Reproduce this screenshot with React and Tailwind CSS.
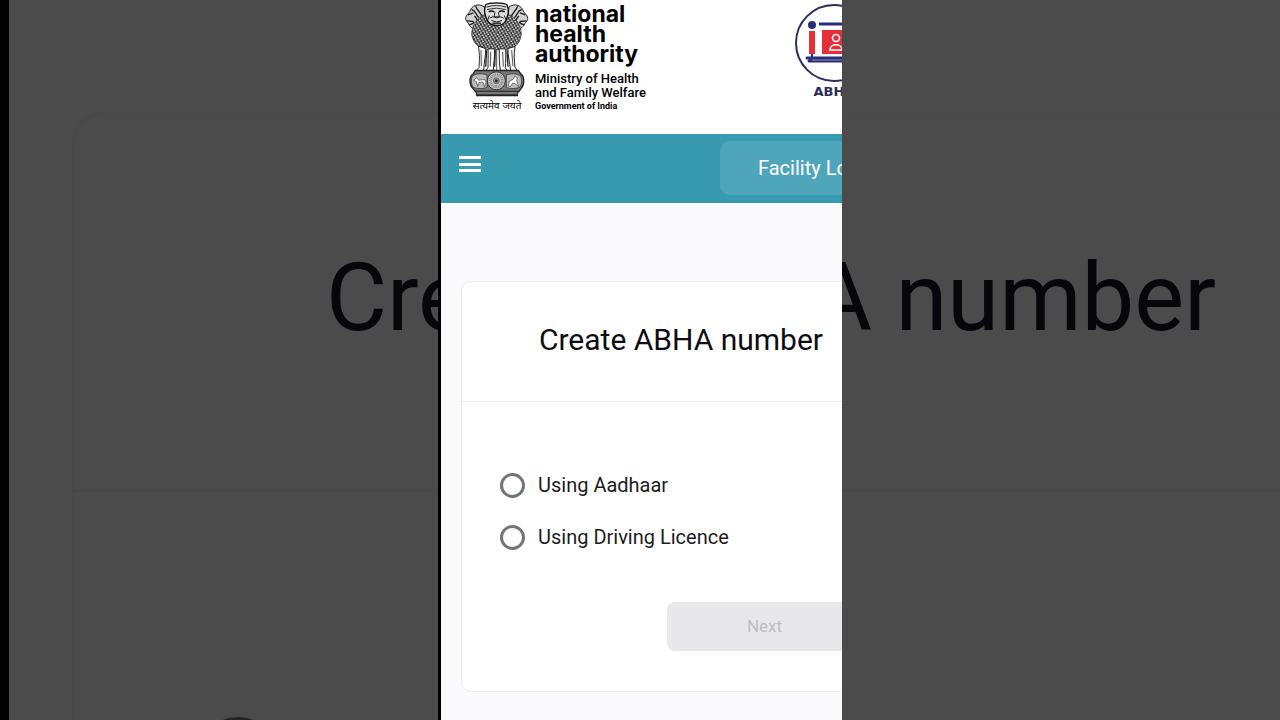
import React, { useState } from "react";

// Lion capital emblem
function Emblem() {
  return (
    <svg viewBox="18 3 192 290" className="h-[97px] w-16 shrink-0" role="img" aria-label="State Emblem of India">
      <defs>
        <pattern id="mane" width="11" height="12" patternUnits="userSpaceOnUse" patternTransform="rotate(12)">
          <rect width="11" height="12" fill="#2c2c2c" />
          <path d="M0 1q3 8 6 1M6 7q2 7 5 1" stroke="#f0f0f0" strokeWidth="3" fill="none" />
        </pattern>
      </defs>
      {/* side heads */}
      <path d="M76 20C58 8 38 16 33 33c-4 8-15 14-13 25 4 8 8 10 12 18 6 10 15 12 24 10l25-20z" fill="#d2d2d2" stroke="#222" strokeWidth="3" />
      <path d="M150 20c18-12 38-4 43 13 4 8 15 14 13 25-4 8-8 10-12 18-6 10-15 12-24 10l-25-20z" fill="#d2d2d2" stroke="#222" strokeWidth="3" />
      <path d="M27 44l16-6M24 62l20 2M30 74q10-2 16-8M38 28c14 4 12 18 22 24M50 18c4 16 18 18 20 36M46 48c8 4 10 16 14 26" stroke="#222" strokeWidth="4" fill="none" />
      <path d="M199 44l-16-6M202 62l-20 2M196 74q-10-2-16-8M188 28c-14 4-12 18-22 24M176 18c-4 16-18 18-20 36M180 48c-8 4-10 16-14 26" stroke="#222" strokeWidth="4" fill="none" />
      {/* manes */}
      <path d="M72 45C50 58 38 80 38 102c2 18 12 32 27 40 14 6 28 7 48 7s36-1 50-7c14-8 22-22 24-40 0-22-12-44-33-57z" fill="url(#mane)" stroke="#2a2a2a" strokeWidth="2" />
      {/* centre head */}
      <path d="M80 14c10-8 54-8 64 0 5 12 5 24 1 35-3 16-12 27-32 27S84 65 80 49c-5-12-4-24 0-35z" fill="#dedede" stroke="#111" strokeWidth="4" />
      <path d="M82 21q30-10 60 0M84 28q28-8 56 0" stroke="#333" strokeWidth="3" fill="none" />
      <path d="M89 35q9-5 17 0M120 35q9-5 17 0" stroke="#111" strokeWidth="5" fill="none" />
      <path d="M108 36l-3 14h16l-3-14M92 54q9-8 21-1 12-7 21 1M97 61q16 9 32 0M91 46l-5 14M136 46l5 14" stroke="#222" strokeWidth="3" fill="none" />
      <path d="M100 69h26" stroke="#111" strokeWidth="4" />
      {/* legs */}
      <g fill="#f6f6f6" stroke="#262626" strokeWidth="3">
        <path d="M58 138c5 28 3 46 2 64l-8 9h22c1-26 7-44 6-66z" />
        <path d="M87 146c1 24 0 40 0 56l-7 10h23c0-24 6-44 3-66z" />
        <path d="M121 146c-1 24 0 42 3 66h20l-5-10c1-16 2-34 1-56z" />
        <path d="M147 145c-1 22 5 40 8 66h20l-7-10c-2-18-4-36 0-62z" />
      </g>
      <path d="M66 150l1 48M95 155l-1 44M131 155l2 44M158 150l4 48M113 148v62" stroke="#555" strokeWidth="3" />
      <path d="M83 150l-3 50M109 150l-2 50M144 150l3 50" stroke="#222" strokeWidth="4" />
      {/* abacus with the wheel */}
      <path d="M49 211h129l8 11c10 5 12 32 0 43l-7 10H50l-8-10c-13-11-11-38 0-43z" fill="#777" stroke="#222" strokeWidth="4" />
      <path d="M40 228c12-9 34-9 44-3v36c-10 6-30 5-42 0-6-9-6-24-2-33zM142 225c12-6 32-6 43 3 4 9 4 24-2 33-12 5-31 6-41 0z" fill="#bbb" stroke="#222" strokeWidth="2" />
      <path d="M44 240l10-8 5 8 18-2 4 8-5 14-4-14-12 1-4 12-3-14zM148 257l3-14 12-6 4-9 8 5-2 9 6 17-9-7-8-4-8 11z" fill="#fff" stroke="#444" strokeWidth="2" />
      <circle cx="112" cy="242" r="27" fill="#c4c4c4" stroke="#333" strokeWidth="3" />
      <circle cx="112" cy="242" r="18" fill="none" stroke="#777" strokeWidth="9" strokeDasharray="2 3" />
      <circle cx="112" cy="242" r="9" fill="#888" stroke="#555" strokeWidth="2" />
      <circle cx="112" cy="242" r="4" fill="#222" />
      <path d="M52 273h124v11H52z" fill="#777" stroke="#222" strokeWidth="3" />
      <path d="M51 286h126" stroke="#222" strokeWidth="5" />
    </svg>
  );
}

function AbhaLogo() {
  return (
    <svg viewBox="0 0 78 78" className="size-[78px]" aria-hidden="true">
      <circle cx="39" cy="39" r="38" fill="#fff" stroke="#2b2d63" strokeWidth="2" />
      <circle cx="17" cy="21" r="4" fill="#2b2d76" />
      <path d="M24 20h36" stroke="#2b2d76" strokeWidth="3" />
      <path d="M14 27h6v23h-6z" fill="#e5303a" />
      <rect x="27" y="26" width="32" height="24" fill="#e5303a" />
      <circle cx="41" cy="34" r="3.5" fill="none" stroke="#fff" strokeWidth="1.6" />
      <path d="M35 46c0-7 12-7 12 0z" fill="none" stroke="#fff" strokeWidth="1.6" />
      <path d="M17 50v4" stroke="#2b2d76" strokeWidth="2" />
      <path d="M12 54h52M14 57h50" stroke="#2b2d76" strokeWidth="3" strokeLinecap="round" fill="none" />
      <path d="M17 56h46" stroke="#8a8cc0" strokeWidth="1" />
    </svg>
  );
}

function MenuIcon() {
  return (
    <svg viewBox="0 0 30 30" className="size-[30px]" fill="currentColor" aria-hidden="true">
      <path d="M4 7h22v3H4zM4 14h22v3H4zM4 20h22v3H4z" />
    </svg>
  );
}

// Dimmed, enlarged copy of the page behind the phone
function Backdrop() {
  return (
    <div aria-hidden="true" className="absolute inset-0 overflow-hidden border-l-[9px] border-black bg-[#4b4b4c] pl-[63px] pt-28">
      <div className="h-[1300px] w-[1398px] rounded-[32px] border-2 border-[#49494a] bg-[#4b4b4b]">
        <div className="flex h-[378px] items-center justify-center border-b-2 border-[#474747] pb-2 text-[94px] text-[#07070b]">
          <span className="whitespace-nowrap">Create ABHA number</span>
        </div>
        <div className="ml-[124px] mt-[225px] size-20 rounded-full border-[6px] border-[#242426]" />
      </div>
    </div>
  );
}

function App() {
  const [method, setMethod] = useState("");

  const methods = [
    { key: "aadhaar", label: "Using Aadhaar" },
    { key: "licence", label: "Using Driving Licence" },
  ];

  return (
    <div className="relative min-h-screen overflow-hidden bg-black font-['Roboto',sans-serif]">
      <Backdrop />

      {/* Phone screen */}
      <div className="relative mx-auto min-h-screen w-full max-w-[404px] overflow-hidden border-l-[3px] border-black bg-[#fafafc]">
        <div className="w-[480px]">
          {/* Logos */}
          <header className="flex h-[134px] items-start justify-between bg-white pl-6 pr-12">
            <div className="flex gap-1.5">
              <div className="flex flex-col items-center pt-px font-['Liberation_Sans','Noto_Sans',sans-serif]">
                <Emblem />
                <span className="text-[10px] leading-4 text-black">सत्यमेव जयते</span>
              </div>
              <div className="pt-1 text-black">
                <p className="font-['Inter',sans-serif] text-[23px] font-bold leading-5">
                  national
                  <br />
                  health
                  <br />
                  authority
                </p>
                <div className="mt-2 font-['Roboto',sans-serif]">
                  <p className="text-[13px] font-medium leading-[14px]">
                    Ministry of Health
                    <br />
                    and Family Welfare
                  </p>
                  <p className="text-[9px] font-bold leading-3">Government of India</p>
                </div>
              </div>
            </div>
            <div className="flex flex-col items-center pt-1">
              <AbhaLogo />
              <span className="mt-0.5 font-['DejaVu_Sans',sans-serif] text-[13px] font-bold leading-4 text-[#2b2d55]">ABHA</span>
            </div>
          </header>

          {/* Navbar */}
          <nav className="flex h-[69px] items-start justify-between bg-[#379aaf] pl-3.5 text-white">
            <button type="button" aria-label="Menu" className="mt-[15px]">
              <MenuIcon />
            </button>
            <button type="button" className="mt-[7px] h-[54px] w-[201px] rounded-[10px] bg-[#4fa6bb] pl-[38px] text-left text-xl">
              Facility Login
            </button>
          </nav>

          {/* Create card */}
          <main className="px-5 pb-7 pt-[78px]">
            <form className="rounded-[10px] border border-[#ededf0] bg-white">
              <h1 className="flex h-[120px] items-center justify-center border-b border-[#ededf0] pb-1 text-3xl text-[#0d0d14]">
                Create ABHA number
              </h1>
              <div className="px-[38px] pb-10 pt-[69px]">
                <div className="flex flex-col gap-6">
                  {methods.map((m) => (
                    <label key={m.key} className="flex items-center gap-[13px] text-xl leading-7 text-[#1c1c20]">
                      <input
                        type="radio"
                        name="method"
                        value={m.key}
                        checked={method === m.key}
                        onChange={() => setMethod(m.key)}
                        className="size-[25px] appearance-none rounded-full border-[3px] border-[#70757d] bg-white checked:border-8 checked:border-[#379aaf]"
                      />
                      {m.label}
                    </label>
                  ))}
                </div>
                <div className="mt-[51px] flex justify-end">
                  <button
                    type="submit"
                    disabled={!method}
                    className="h-[49px] w-[195px] rounded-lg bg-[#379aaf] text-[17px] text-white disabled:bg-[#e8e8ea] disabled:text-[#bdbdc0]"
                  >
                    Next
                  </button>
                </div>
              </div>
            </form>
          </main>
        </div>
      </div>
    </div>
  );
}

export default App;
